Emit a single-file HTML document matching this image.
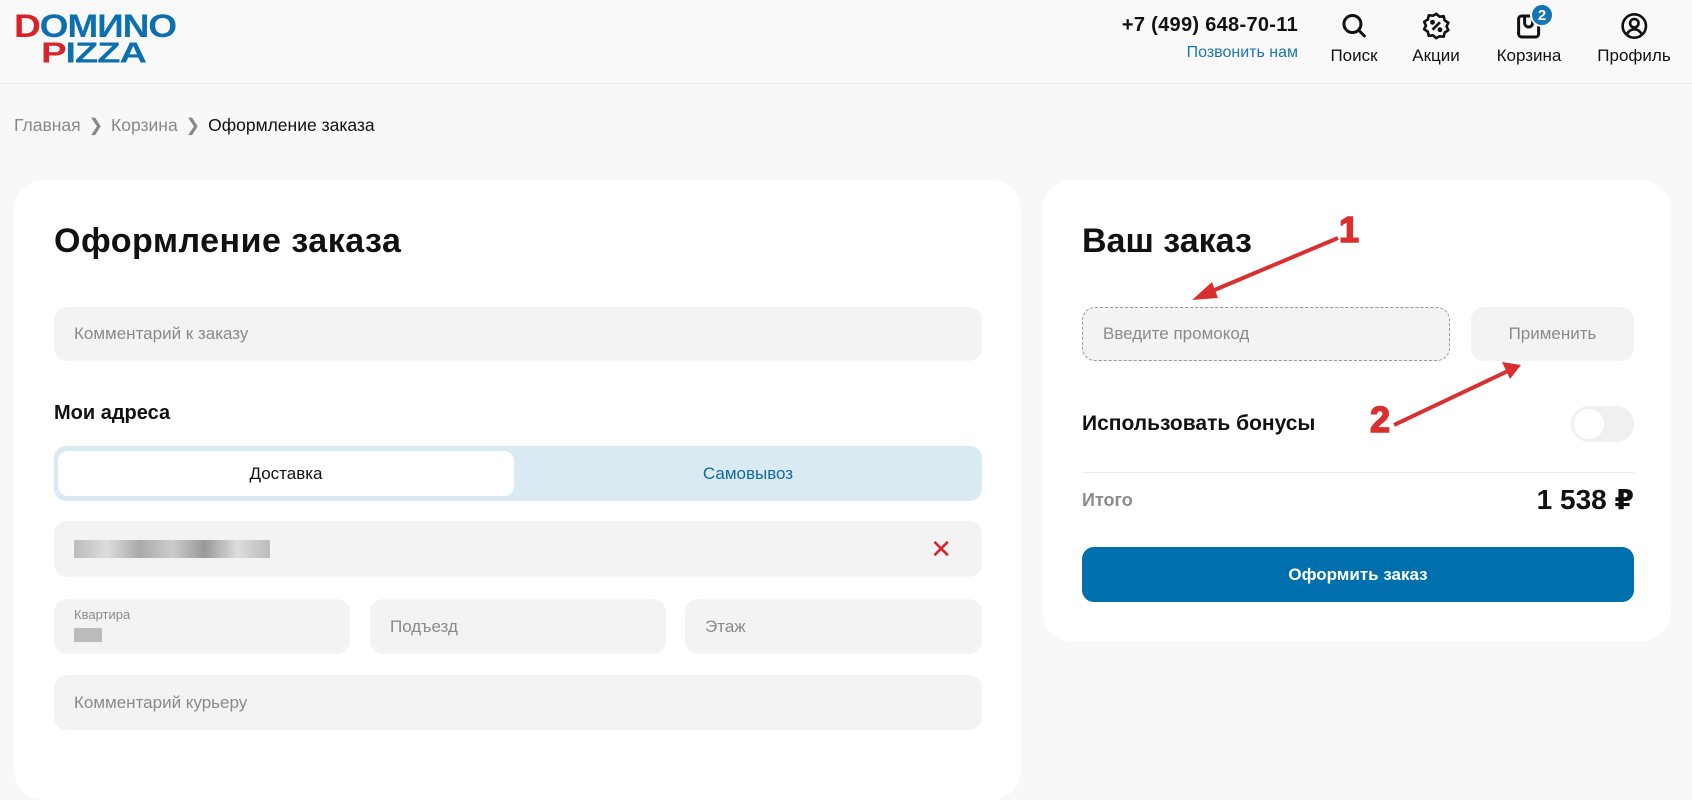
<!DOCTYPE html>
<html><head><meta charset="utf-8"><style>
*{box-sizing:border-box;margin:0;padding:0}
body{width:1692px;height:756px;overflow:hidden;background:#f8f8f8;font-family:"Liberation Sans","DejaVu Sans",sans-serif;color:#111;position:relative}
.abs{position:absolute}
header{position:absolute;left:0;top:0;width:1692px;height:84px;background:#f9f9f9;border-bottom:1px solid #ececec}
.lg{position:absolute;font-weight:900;font-size:32px;line-height:32px;letter-spacing:-1px;transform-origin:0 0;white-space:nowrap}
.nav{position:absolute;top:12px;text-align:center;font-size:17px;color:#111;transform:translateX(-50%)}
.nav svg{display:block;margin:0 auto 6px}
.card{position:absolute;background:#fff;border-radius:30px}
.inp{position:absolute;background:#f3f3f3;border-radius:13px;color:#8a8a8a;font-size:17px;padding-left:20px;display:flex;align-items:center}
.red{color:#d8232a}
.num{position:absolute;font-weight:bold;font-size:36px;color:#d9302f;-webkit-text-stroke:1.5px #d9302f;line-height:36px}
</style></head><body>
<header>
 <div class="lg" style="left:14px;top:10px;transform:scale(1.16,1)"><span class="red">D</span><span style="color:#0b6fb0">OMИNO</span></div>
 <div class="lg" style="left:41px;top:38px;transform:scale(1.2,0.9)"><span class="red">P</span><span style="color:#0b6fb0">IZZA</span></div>
 <div class="abs" style="right:394px;top:14px;font-size:20px;font-weight:bold;letter-spacing:.3px">+7 (499) 648-70-11</div>
 <div class="abs" style="right:394px;top:44px;font-size:16px;color:#1a77ad">Позвонить нам</div>
 <div class="nav" style="left:1354px"><svg width="28" height="28" viewBox="0 0 28 28" fill="none" stroke="#111" stroke-width="3"><circle cx="12" cy="12" r="8.5"/><path d="M18 18l6 6" stroke-linecap="round"/></svg>Поиск</div>
 <div class="nav" style="left:1436px"><svg width="30" height="28" viewBox="0 0 30 30" fill="none" stroke="#111" stroke-width="2.8"><path d="M15 2l3.5 3 4.5-.5 1 4.5 4 2.5-2 4 2 4-4 2.5-1 4.5-4.5-.5L15 28l-3.5-3-4.5.5-1-4.5-4-2.5 2-4-2-4 4-2.5 1-4.5 4.5.5z" stroke-linejoin="round"/><path d="M11 19l8-8"/><circle cx="11" cy="11" r="1.2" fill="#111"/><circle cx="19" cy="19" r="1.2" fill="#111"/></svg>Акции</div>
 <div class="nav" style="left:1529px"><svg width="28" height="28" viewBox="0 0 28 28" fill="none" stroke="#111" stroke-width="3"><rect x="4" y="4" width="20" height="21" rx="3"/><path d="M10 4v7a4 4 0 0 0 8 0V4"/></svg>Корзина</div>
 <div class="abs" style="left:1530px;top:3px;width:24px;height:24px;border-radius:50%;background:#1574b3;color:#fff;font-size:15px;font-weight:bold;text-align:center;line-height:22px;border:2px solid #f9f9f9">2</div>
 <div class="nav" style="left:1634px"><svg width="30" height="28" viewBox="0 0 30 30" fill="none" stroke="#111" stroke-width="2.8"><circle cx="15" cy="15" r="12.5"/><circle cx="15" cy="12" r="4.5"/><path d="M7 24c2-4 5-5.5 8-5.5s6 1.5 8 5.5"/></svg>Профиль</div>
</header>
<div class="abs" style="left:14px;top:115px;font-size:17.5px;color:#888">Главная <span style="margin:0 3px">&#x276F;</span> Корзина <span style="margin:0 3px">&#x276F;</span> <span style="color:#111">Оформление заказа</span></div>

<div class="card" style="left:14px;top:180px;width:1007px;height:620px">
 <div class="abs" style="left:40px;top:42px;font-size:34px;font-weight:bold;letter-spacing:.5px">Оформление заказа</div>
 <div class="inp" style="left:40px;top:127px;width:928px;height:54px">Комментарий к заказу</div>
 <div class="abs" style="left:40px;top:222px;font-size:20px;font-weight:bold">Мои адреса</div>
 <div class="abs" style="left:40px;top:266px;width:928px;height:55px;background:#d9eaf3;border-radius:12px">
  <div class="abs" style="left:4px;top:5px;width:456px;height:45px;background:#fff;border-radius:10px;text-align:center;line-height:45px;font-size:17px">Доставка</div>
  <div class="abs" style="left:464px;top:5px;width:460px;height:45px;text-align:center;line-height:45px;font-size:17px;color:#0f6aa0">Самовывоз</div>
 </div>
 <div class="inp" style="left:40px;top:341px;width:928px;height:56px"><div style="width:196px;height:18px;background:linear-gradient(90deg,#bbb,#ddd,#aaa,#ccc,#999,#ddd,#bbb)"></div><span class="red" style="position:absolute;right:30px;font-size:26px">✕</span></div>
 <div class="inp" style="left:40px;top:419px;width:296px;height:55px;display:block;padding-top:8px"><div style="font-size:13px">Квартира</div><div style="width:28px;height:14px;background:#bbb;margin-top:6px"></div></div>
 <div class="inp" style="left:356px;top:419px;width:296px;height:55px">Подъезд</div>
 <div class="inp" style="left:671px;top:419px;width:297px;height:55px">Этаж</div>
 <div class="inp" style="left:40px;top:495px;width:928px;height:55px">Комментарий курьеру</div>
</div>

<div class="card" style="left:1042px;top:180px;width:629px;height:461px">
 <div class="abs" style="left:40px;top:42px;font-size:34px;font-weight:bold">Ваш заказ</div>
 <div class="inp" style="left:40px;top:127px;width:368px;height:54px;border:1px dashed #999">Введите промокод</div>
 <div class="inp" style="left:429px;top:127px;width:163px;height:54px;padding:0;justify-content:center">Применить</div>
 <div class="abs" style="left:40px;top:232px;font-size:21px;font-weight:bold">Использовать бонусы</div>
 <div class="abs" style="left:529px;top:226px;width:63px;height:36px;border-radius:18px;background:#f0f0f0"><div style="margin:3px;width:30px;height:30px;border-radius:50%;background:#fff"></div></div>
 <div class="abs" style="left:40px;top:292px;width:552px;height:1px;background:#ececec"></div>
 <div class="abs" style="left:40px;top:310px;font-size:18px;font-weight:bold;color:#8a8a8a">Итого</div>
 <div class="abs" style="right:37px;top:303px;font-size:28px;font-weight:bold">1 538 ₽</div>
 <div class="abs" style="left:40px;top:367px;width:552px;height:55px;background:#006fad;border-radius:12px;color:#fff;font-size:17px;font-weight:bold;text-align:center;line-height:55px">Оформить заказ</div>
</div>

<svg class="abs" style="left:0;top:0" width="1692" height="756">
 <g stroke="#d9302f" stroke-width="4" fill="#d9302f">
  <line x1="1338" y1="238" x2="1205" y2="294"/><polygon points="1192,300 1212,282 1218,298" stroke="none"/>
  <line x1="1394" y1="425" x2="1508" y2="371"/><polygon points="1521,365 1502,362 1510,379" stroke="none"/>
 </g>
</svg>
<div class="num" style="left:1339px;top:212px">1</div>
<div class="num" style="left:1370px;top:402px">2</div>
</body></html>
